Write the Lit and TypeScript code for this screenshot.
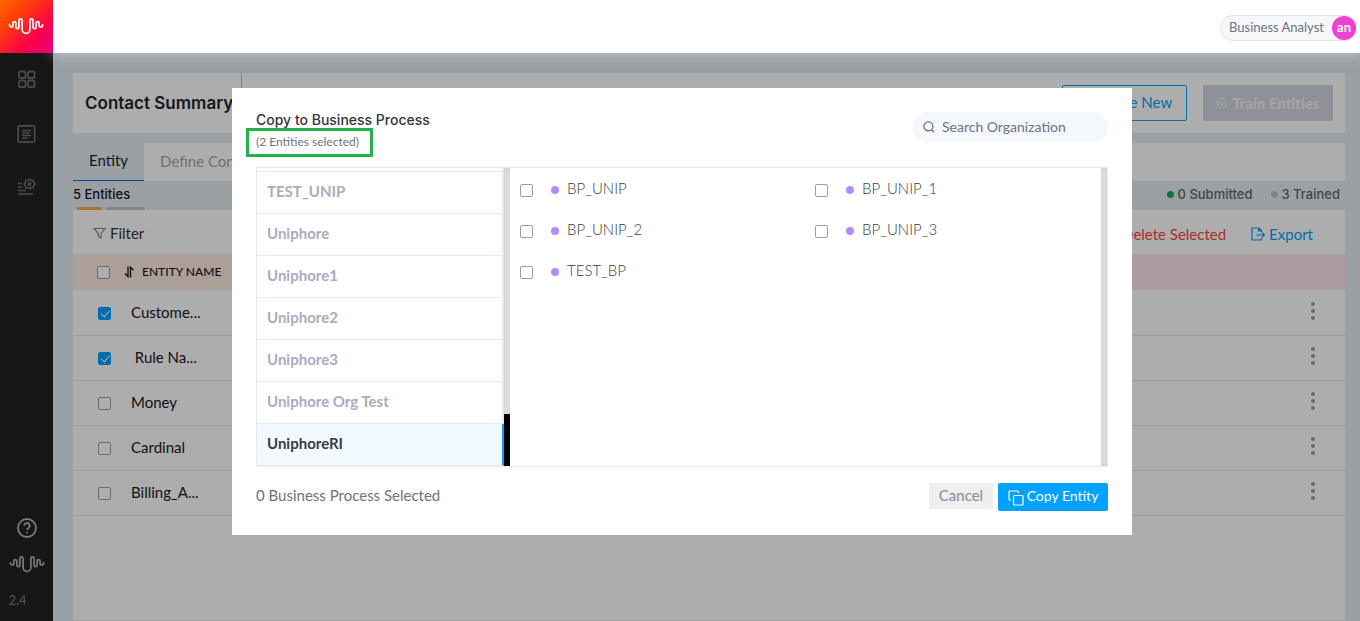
import { LitElement, html, css } from "lit";
import { customElement, state } from "lit/decorators.js";
import { classMap } from "lit/directives/class-map.js";

interface Entity {
  name: string;
  selected: boolean;
}

@customElement("wave-mark")
export class WaveMark extends LitElement {
  static styles = css`
    :host { display: block; width: 36px; height: 18px; }
    .mark { display: block; width: 36px; height: 18px; fill: none; stroke: currentColor; stroke-width: 1.7; stroke-linecap: round; stroke-linejoin: round; }
  `;
  render() {
    return html`<svg class="mark" viewBox="0 0 36 18" aria-hidden="true">
      <path d="M1.500 7.500v.8a1.700 1.700 0 0 0 3.400 0V6.200a1.500 1.500 0 0 1 3 0v4a1.500 1.500 0 0 0 3 0V3.500a1.600 1.600 0 0 1 3.200 0V12.500a3.900 3.900 0 0 0 7.800 0V3.500a1.600 1.600 0 0 1 3.200 0v6.700a1.500 1.500 0 0 0 3 0v-4a1.500 1.500 0 0 1 3 0v2.100a1.700 1.700 0 0 0 3.400 0V7.500"/>
    </svg>`;
  }
}

@customElement("app-root")
export class AppRoot extends LitElement {
  @state() private entities: Entity[] = [
    { name: "Custome...", selected: true },
    { name: " Rule Na...", selected: true },
    { name: "Money", selected: false },
    { name: "Cardinal", selected: false },
    { name: "Billing_A...", selected: false },
  ];
  @state() private organizations = ["TEST_UNIP", "Uniphore", "Uniphore1", "Uniphore2", "Uniphore3", "Uniphore Org Test", "UniphoreRI"];
  @state() private active = "UniphoreRI";
  private processes = ["BP_UNIP", "BP_UNIP_1", "BP_UNIP_2", "BP_UNIP_3", "TEST_BP"];

  static styles = css`
    :host {
      display: block;
      font-family: Lato, "Open Sans", sans-serif;
      font-size: 15px;
      line-height: 20px;
      color: #17171c;
    }
    * { box-sizing: border-box; }
    button, input { font: inherit; color: inherit; }
    button { border: 0; background: none; padding: 0; cursor: pointer; }
    a { color: inherit; text-decoration: none; }
    svg { display: block; flex: none; fill: none; stroke: currentColor; }

    .shell {
      position: relative;
      display: grid;
      grid-template: 53px 1fr / 53px 1fr;
      height: 100vh;
      overflow: hidden;
      background: #e5ecf2;
    }
    .brand {
      position: relative;
      z-index: 4;
      display: grid;
      place-items: center;
      padding: 0 1px 1px 0;
      color: #fff;
      background: linear-gradient(135deg, #ff6a00 0%, #ff3d0a 30%, #fb0048 68%, #e6007e 100%);
    }
    .topbar {
      position: relative;
      z-index: 3;
      display: flex;
      align-items: center;
      justify-content: flex-end;
      padding: 2px 3px 0 0;
      background: #fff;
      box-shadow: 0 2px 12px rgba(228, 230, 242, 0.5);
    }
    .account {
      display: flex;
      align-items: center;
      gap: 8px;
      height: 26px;
      padding: 0 0 0 8px;
      border: 1px solid #e4e4e8;
      border-radius: 13px;
      background: #f6f7fa;
      color: #71727e;
      font-size: 13px;
    }
    .who { padding-bottom: 1px; }
    .avatar {
      display: grid;
      place-items: center;
      width: 24px;
      height: 24px;
      padding-bottom: 1px;
      border-radius: 50%;
      background: #ec42cf;
      color: #fff;
      font-size: 13px;
      font-weight: 700;
      line-height: 16px;
    }

    .rail {
      display: flex;
      flex-direction: column;
      align-items: center;
      padding: 17px 0 11px;
      background: #232323;
      color: #6c6c76;
    }
    .tools { display: grid; gap: 34px; }
    .foot {
      display: grid;
      justify-items: center;
      gap: 17px;
      margin-top: auto;
      color: #b0b0ba;
    }
    .version { justify-self: start; color: #7c7c86; font-size: 13px; }

    .page {
      display: flex;
      flex-direction: column;
      min-width: 0;
      padding: 20px 15px 1px 20px;
    }
    .summary {
      display: flex;
      height: 60px;
      padding-right: 12px;
      background: #fff;
    }
    .heading {
      margin: 0;
      padding: 0 8px 0 12px;
      border-right: 1px solid #b9bbc6;
      font: 600 17px/60px Inter, sans-serif;
      color: #24242a;
    }
    .actions { display: flex; align-items: center; gap: 16px; margin-left: auto; }
    .create, .train {
      display: flex;
      align-items: center;
      justify-content: center;
      height: 36px;
      border-radius: 2px;
    }
    .create { gap: 8px; width: 125px; padding: 0 4px 3px 0; border: 1px solid #00a1ff; color: #00a1ff; }
    .train { gap: 4px; width: 130px; background: #d3d6e2; color: #f4f4f6; font-weight: 700; }

    .tabs { display: flex; height: 38px; margin-top: 10px; background: #fff; }
    .tab { padding: 0 16px 3px; color: #a4a5b1; }
    .tab.current { background: #e5ecf2; border-bottom: 1px solid #0070e0; color: #24242a; }

    .status {
      display: flex;
      justify-content: space-between;
      height: 29px;
      font: 500 13px/26px Inter, sans-serif;
    }
    .bars { display: flex; gap: 4px; padding-left: 4px; line-height: 0; }
    .bar { height: 4px; border-radius: 2px; background: #c4c4cc; width: 39px; }
    .bar.warm { background: #ffab31; width: 25px; }
    .legend { display: flex; gap: 18px; padding-right: 5px; color: #65656f; }
    .mark { display: flex; align-items: center; gap: 4px; height: 26px; }
    .mark.draft { padding-right: 16px; }
    .pip { width: 7px; height: 7px; border-radius: 50%; background: #c0c0c8; }
    .pip.green { background: #00b25f; }

    .panel { flex: 1; min-height: 0; background: #fff; }
    .toolbar {
      display: flex;
      align-items: center;
      height: 44px;
      padding: 4px 32px 0 20px;
    }
    .filter, .export { display: flex; align-items: center; gap: 4px; }
    .filter { padding-bottom: 2px; color: #33333a; }
    .filter svg { color: #85858f; }
    .delete { margin-left: auto; color: #fb4444; }
    .export { margin-left: 25px; color: #00a1ff; }

    .entities { width: 100%; border-collapse: separate; border-spacing: 0; }
    .entities td, .entities th { padding: 0; text-align: left; font-weight: 400; white-space: pre; }
    .headrow { height: 37px; background: linear-gradient(90deg, #fdece0, #fee4ee) 0 0 / 100% 36px no-repeat; }
    .entities .headrow th { padding-bottom: 2px; }
    .entityname { display: flex; align-items: center; gap: 7px; margin-left: -7px; font-size: 12px; font-weight: 500; }
    .row td { height: 45px; border-bottom: 1px solid #e4e8ee; }
    .entities .name { padding-bottom: 2px; }
    .entities .pick { width: 58px; padding-left: 25px; }
    .entities .headrow .pick { padding: 0 0 0 24px; }
    .menu { width: 40px; }
    .dots { display: block; width: 16px; height: 22px; color: #9b9ba6; }

    .tick {
      appearance: none;
      display: block;
      flex: none;
      width: 13px;
      height: 13px;
      margin: 0;
      border: 1px solid #9c9cab;
      border-radius: 2px;
      background: #fff;
    }
    .tick:checked { border-color: #00a1ff; background: #00a1ff; }
    .tick:checked::after {
      content: "";
      display: block;
      width: 4px;
      height: 8px;
      margin: 0 0 0 4px;
      border: solid #fff;
      border-width: 0 1px 1px 0;
      transform: rotate(42deg);
    }

    .overlay {
      position: absolute;
      inset: 0;
      z-index: 2;
      display: flex;
      justify-content: center;
      align-items: flex-start;
      padding: 88px 0 0 4px;
      background: rgba(0, 0, 0, 0.32);
    }
    .dialog {
      width: 900px;
      max-width: 94vw;
      padding: 24px;
      background: #fff;
    }
    .dialoghead { display: flex; justify-content: space-between; height: 55px; }
    .title { margin: 0; font: 500 14px/16px Inter, sans-serif; color: #34343a; }
    .selected {
      position: relative;
      display: inline-block;
      margin: 4px 0 0;
      color: #71727e;
      font-size: 12px;
      line-height: 20px;
    }
    .selected::after {
      content: "";
      position: absolute;
      inset: -4px -14px -5px -10px;
      border: 3px solid #22b14c;
    }
    .search {
      display: flex;
      align-items: center;
      gap: 7px;
      width: 195px;
      height: 30px;
      padding: 0 10px;
      border-radius: 15px;
      background: #f4f7fc;
      color: #71727e;
    }
    .query {
      width: 100%;
      min-width: 0;
      padding: 0;
      border: 0;
      outline: 0;
      background: none;
      font-size: 14px;
    }
    .query::placeholder { color: #71727e; opacity: 1; }

    .chooser {
      display: grid;
      grid-template-columns: 247px 6px 1fr 6px;
      height: 300px;
      border: 1px solid #e6eaf4;
    }
    .orgs {
      display: flex;
      flex-direction: column;
      justify-content: flex-end;
      min-height: 0;
      overflow: hidden;
    }
    .org {
      flex: none;
      height: 42px;
      padding: 0 10px 3px;
      border-right: 2px solid #e6eaf4;
      border-bottom: 1px solid #e6eaf4;
      color: #a9acbd;
      font-weight: 700;
      text-align: left;
    }
    .org.rest { flex: 1; height: auto; }
    .org.current { border-right-color: #00a1ff; background: #f2f9ff; color: #3c3c44; }
    .track { display: flex; flex-direction: column; justify-content: flex-end; background: #e4e4e4; box-shadow: inset 0 0 5px rgba(0, 0, 0, 0.12); }
    .thumb { height: 52px; background: #000; }
    .processes {
      display: grid;
      grid-template-columns: 1fr 1fr;
      grid-auto-rows: 41px;
      align-content: start;
      padding-right: 1px;
    }
    .process { display: flex; align-items: center; padding: 0 0 2px 10px; color: #3c3c44; font-weight: 300; }
    .process .tick { margin-top: 6px; }
    .bullet { width: 8px; height: 8px; margin: 4px 8px 0 18px; border-radius: 50%; background: #b18cff; }

    .dialogfoot { display: flex; align-items: flex-start; gap: 5px; padding-top: 16px; }
    .count { margin: 0 auto 0 0; padding-top: 2px; color: #71727e; }
    .cancel { width: 64px; height: 26px; padding-bottom: 2px; background: #efefef; color: #8a8a97; }
    .copy {
      display: flex;
      align-items: center;
      justify-content: center;
      gap: 3px;
      width: 110px;
      height: 28px;
      border-radius: 2px;
      background: #00a1ff;
      color: #fff;
      font-size: 14px;
    }
    .copy svg { margin-top: 2px; }
    .copytext { padding-bottom: 2px; }
  `;

  private toggle(index: number) {
    this.entities = this.entities.map((e, i) => (i === index ? { ...e, selected: !e.selected } : e));
  }

  render() {
    return html`
      <div class="shell">
        <a class="brand" href="#" aria-label="Home"><wave-mark></wave-mark></a>
        <header class="topbar">
          <button class="account"><span class="who">Business Analyst</span><span class="avatar">an</span></button>
        </header>

        <nav class="rail" aria-label="Main">
          <div class="tools">
            <a href="#" aria-label="Dashboard"><svg width="20" height="20" viewBox="0 0 20 20" stroke-width="1.800"><rect x="2" y="1.500" width="6.500" height="6.500" rx="1.600"/><rect x="11" y="1.500" width="6.500" height="6.500" rx="1.600"/><rect x="2" y="10.500" width="6.500" height="6.500" rx="1.600"/><rect x="11" y="10.500" width="6.500" height="6.500" rx="1.600"/></svg></a>
            <a href="#" aria-label="Documents"><svg width="20" height="20" viewBox="0 0 20 20" stroke-width="1.800"><rect x="1.200" y="1.800" width="16.400" height="16.400" rx="1.200"/><path d="M5 6.500h9M5 9h8M5 11.500h9M5 14h5.500" stroke-width="1.400"/></svg></a>
            <a href="#" aria-label="Rules"><svg width="20" height="20" viewBox="0 0 20 20" stroke-width="1.600"><path d="M1 5.500h4M1 9h4M1 12.500h8M1 16h15"/><path d="M11 2.500 12.500 1.200 14 2.500l2.200-.2.600 2 1.400 1.700-1.400 1.800-.6 2-2.200-.2-1.500 1.400L11 9.700l-2.200.1-.5-2L6.900 6l1.400-1.700.5-2z" stroke-width="1.600" stroke-linejoin="round"/><circle cx="12.500" cy="6" r="1.200"/></svg></a>
          </div>
          <div class="foot">
            <a href="#" aria-label="Help"><svg width="20" height="20" viewBox="0 0 20 20" stroke-width="1.800"><circle cx="10" cy="10" r="9"/><path d="M7.300 7.800a2.700 2.700 0 1 1 4 2.300c-.9.500-1.300.9-1.300 2M10 13.700v1.600"/></svg></a>
            <wave-mark></wave-mark>
            <span class="version">2.4</span>
          </div>
        </nav>

        <main class="page">
          <section class="summary">
            <h1 class="heading">Contact Summary</h1>
            <div class="actions">
              <button class="create"><svg width="13" height="13" viewBox="0 0 13 13"><path d="M6.500 2v9M2 6.500h9"/></svg>Create New</button>
              <button class="train"><svg width="12" height="12" viewBox="0 0 12 12" stroke-width="1.100"><path d="M8.800 2A4.800 4.800 0 1 0 10.800 6M3.800 5.800l2 2L10.800 2.500"/></svg>Train Entities</button>
            </div>
          </section>
          <div class="tabs">
            <button class="tab current">Entity</button>
            <button class="tab">Define Context</button>
          </div>
          <div class="status">
            <div>5 Entities
              <div class="bars"><span class="bar warm"></span><span class="bar"></span></div>
            </div>
            <div class="legend">
              <span class="mark draft"><span class="pip"></span>0 Draft</span>
              <span class="mark"><span class="pip green"></span>0 Submitted</span>
              <span class="mark"><span class="pip"></span>3 Trained</span>
            </div>
          </div>
          <section class="panel">
            <div class="toolbar">
              <button class="filter"><svg width="13" height="13" viewBox="0 0 13 13" stroke-width="1.200"><path d="M1 1.500h11L8 6.500V11L5.200 9.500v-3z"/></svg>Filter</button>
              <button class="delete">Delete Selected</button>
              <button class="export"><svg width="14" height="14" viewBox="0 0 14 14" stroke-width="1.200"><path d="M10.500 5V3.500L8 1H1v12h9.500v-2M7.500 1v3h3M5.500 8h7.500M11 5.700 13.300 8 11 10.300"/></svg>Export</button>
            </div>
            <table class="entities">
              <thead>
                <tr class="headrow">
                  <th class="pick"><input class="tick" type="checkbox" aria-label="Select all entities" /></th>
                  <th><span class="entityname"><svg width="11" height="12" viewBox="0 0 11 12" stroke-width="1.400"><path d="M4 .5v10L1 7.500M6.500 11.500V1.300l3 3"/></svg>ENTITY NAME</span></th>
                  <th class="menu"></th>
                </tr>
              </thead>
              <tbody>
                ${this.entities.map((e, i) => html`
                  <tr class="row">
                    <td class="pick"><input class="tick" type="checkbox" aria-label=${e.name.trim()} .checked=${e.selected} @change=${() => this.toggle(i)} /></td>
                    <td class="name">${e.name}</td>
                    <td class="menu"><button aria-label="Entity menu"><svg class="dots" viewBox="0 0 16 22"><g fill="currentColor" stroke="none"><circle cx="8" cy="4" r="2"/><circle cx="8" cy="11" r="2"/><circle cx="8" cy="18" r="2"/></g></svg></button></td>
                  </tr>`)}
              </tbody>
            </table>
          </section>
        </main>

        <div class="overlay">
          <section class="dialog" role="dialog" aria-labelledby="dialog-title">
            <div class="dialoghead">
              <div>
                <h2 class="title" id="dialog-title">Copy to Business Process</h2>
                <p class="selected">(2 Entities selected)</p>
              </div>
              <label class="search">
                <svg width="12" height="12" viewBox="0 0 12 12" stroke-width="1.300"><circle cx="5.400" cy="5.400" r="4.500"/><path d="m8.200 8.200 2.800 3"/></svg>
                <input class="query" type="text" placeholder="Search Organization" aria-label="Search Organization" />
              </label>
            </div>
            <div class="chooser">
              <div class="orgs">
                <div class="org rest"></div>
                ${this.organizations.map((name) => html`<button class=${classMap({ org: true, current: name === this.active })} @click=${() => (this.active = name)}>${name}</button>`)}
              </div>
              <div class="track"><div class="thumb"></div></div>
              <div class="processes">
                ${this.processes.map((name) => html`<label class="process"><input class="tick" type="checkbox" /><span class="bullet"></span>${name}</label>`)}
              </div>
              <div class="track"></div>
            </div>
            <div class="dialogfoot">
              <p class="count">0 Business Process Selected</p>
              <button class="cancel">Cancel</button>
              <button class="copy"><svg width="16" height="16" viewBox="0 0 16 16" stroke-width="1.200"><rect x="5.500" y="5.500" width="9.500" height="9.500" rx="1"/><path d="M3 10H2a1 1 0 0 1-1-1V2a1 1 0 0 1 1-1h7.500a1 1 0 0 1 1 1v1"/></svg><span class="copytext">Copy Entity</span></button>
            </div>
          </section>
        </div>
      </div>
    `;
  }
}
